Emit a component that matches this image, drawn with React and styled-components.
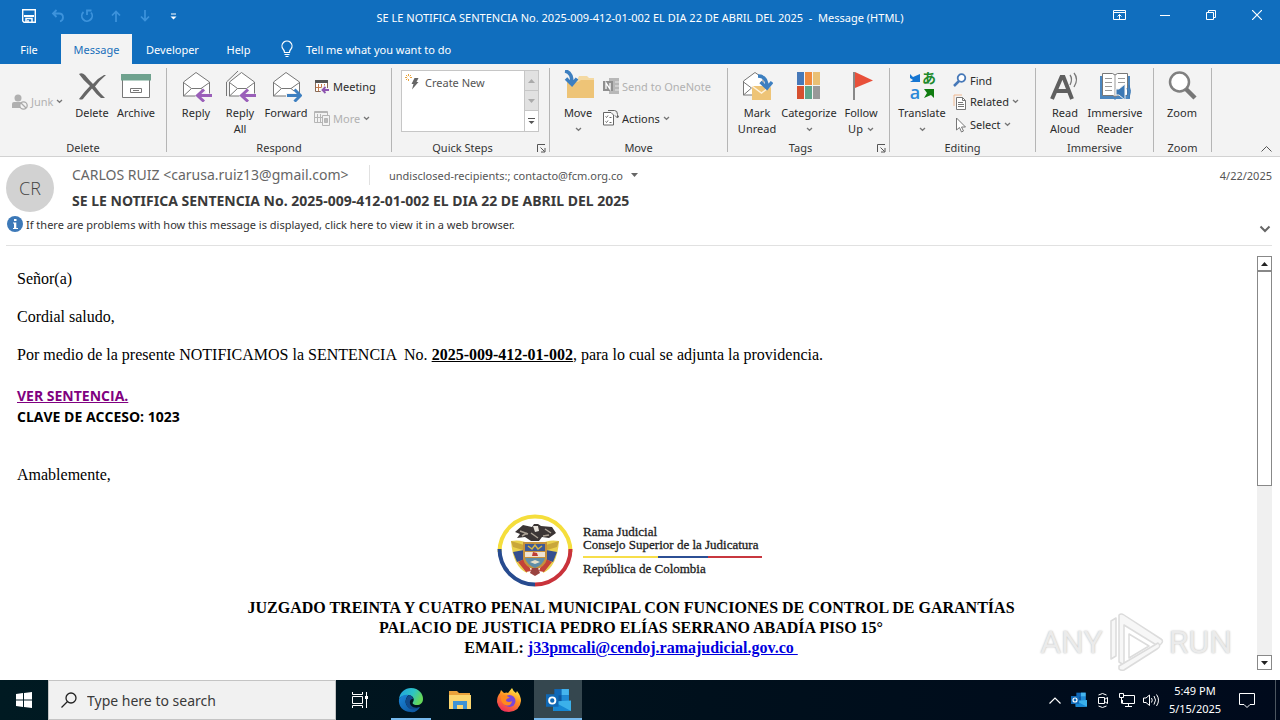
import React from "react";
import styled, { createGlobalStyle, css } from "styled-components";

const ui = '"Noto Sans", "Open Sans", sans-serif';
const serif = '"Liberation Serif", serif';

const GlobalStyle = createGlobalStyle`
  *, *::before, *::after { box-sizing: border-box; }
  body { margin: 0; background: #fff; font-family: ${ui}; font-size: 11px; color: #333; }
  button, input { font: inherit; color: inherit; }
  svg { display: block; flex: none; }
  p, h1, h2 { margin: 0; }
`;

const Window = styled.div`
  min-height: 100vh;
  display: flex;
  flex-direction: column;
`;

const PlainButton = styled.button`
  border: 0;
  padding: 0;
  background: none;
  display: flex;
  align-items: center;
  justify-content: center;
`;

/* ---------- Title bar and tabs ---------- */
const TitleBar = styled.header`
  background: #106ebe;
  color: #fff;
  height: 34px;
  display: grid;
  grid-template-columns: 1fr auto 1fr;
`;
const QuickAccess = styled.div`
  display: flex;
  padding-left: 14px;
`;
const QuickButton = styled(PlainButton)`
  width: 29px;
  height: 32px;
  color: ${(p) => (p.disabled ? "#3d93dc" : "#fff")};
`;
const WindowTitle = styled.h1`
  font-size: 11px;
  font-weight: 400;
  line-height: 36px;
  white-space: pre;
`;
const WindowButtons = styled.div`
  display: flex;
  justify-content: flex-end;
`;
const WindowButton = styled(PlainButton)`
  width: 46px;
  height: 30px;
`;
const TabBar = styled.nav`
  background: #106ebe;
  height: 30px;
  display: flex;
  color: #fff;
`;
const Tab = styled(PlainButton)`
  width: ${(p) => p.$width}px;
  ${(p) =>
    p.$active &&
    css`
      background: #f3f3f3;
      color: #1a6fba;
      margin-left: 3px;
    `}
`;
const TellMe = styled(PlainButton)`
  margin-left: 16px;
  gap: 12px;
`;

/* ---------- Ribbon ---------- */
const Ribbon = styled.section`
  background: #f3f3f3;
  border-bottom: 1px solid #d2d2d2;
  height: 93px;
  padding: 4px 0;
  display: flex;
`;
const Group = styled.div`
  width: ${(p) => p.$width}px;
  flex: none;
  border-right: 1px solid #b5b5b5;
  display: flex;
  flex-direction: column;
`;
const GroupItems = styled.div`
  flex: 1;
  min-height: 0;
  display: flex;
  align-items: flex-start;
  padding: 2px 0 0 ${(p) => p.$pad}px;
`;
const GroupFooter = styled.div`
  display: flex;
  align-items: center;
  flex: none;
  height: 16px;
  margin-bottom: -4px;
`;
const GroupLabel = styled.div`
  flex: 1;
  text-align: center;
  line-height: 16px;
`;
const Launcher = styled(PlainButton)`
  width: 16px;
  height: 16px;
`;
const BigButton = styled(PlainButton)`
  width: ${(p) => p.$width}px;
  flex-direction: column;
  justify-content: flex-start;
  line-height: 16px;
  white-space: nowrap;
  color: #2b2b2b;
`;
const BigIcon = styled.span`
  height: 35px;
`;
const Line = styled.span`
  min-height: 16px;
  display: flex;
  align-items: center;
  gap: 4px;
`;
const SmallColumn = styled.div`
  display: flex;
  flex-direction: column;
  min-width: ${(p) => p.$width || 0}px;
  padding: ${(p) => p.$top || 0}px 0 0 ${(p) => p.$left || 0}px;
`;
const SmallButton = styled(PlainButton)`
  height: ${(p) => p.$height}px;
  justify-content: flex-start;
  gap: 3px;
  white-space: nowrap;
  color: ${(p) => (p.disabled ? "#b1b1b1" : "#2b2b2b")};
`;
const Gallery = styled.div`
  width: 138px;
  height: 62px;
  border: 1px solid #c6c6c6;
  background: #fff;
  display: flex;
  justify-content: space-between;
`;
const GalleryItem = styled(PlainButton)`
  height: 22px;
  padding-left: 3px;
  gap: 4px;
  color: #555;
`;
const GalleryScroll = styled.div`
  width: 14px;
  display: grid;
  grid-template-rows: 1fr 1fr 1fr;
`;
const GalleryArrow = styled(PlainButton)`
  border-left: 1px solid #c6c6c6;
  border-bottom: ${(p) => (p.disabled ? "1px solid #c6c6c6" : "0")};
  background: ${(p) => (p.disabled ? "#e1e1e1" : "#fff")};
  color: #555;
`;
const Collapse = styled(PlainButton)`
  margin: auto 7px -4px auto;
  width: 14px;
  height: 14px;
`;

/* ---------- Message header ---------- */
const MessageHeader = styled.header`
  margin: 0 8px 0 6px;
  padding: 5px 0 11px;
  border-bottom: 1px solid #e1e1e1;
`;
const HeaderTop = styled.div`
  display: flex;
  gap: 18px;
`;
const Avatar = styled.div`
  width: 48px;
  height: 48px;
  margin-top: 2px;
  border-radius: 50%;
  background: #d2d2d2;
  color: #444;
  font: 300 18px "Open Sans", sans-serif;
  display: flex;
  align-items: center;
  justify-content: center;
`;
const HeaderLines = styled.div`
  flex: 1;
`;
const SenderRow = styled.div`
  height: 26px;
  display: flex;
  align-items: center;
  color: #555;
`;
const Sender = styled.span`
  font-size: 14px;
  color: #666;
  width: 298px;
  border-right: 1px solid #e1e1e1;
  line-height: 20px;
  white-space: nowrap;
`;
const Recipients = styled(PlainButton)`
  padding-left: 19px;
  gap: 8px;
`;
const DateText = styled.time`
  margin-left: auto;
`;
const Subject = styled.h2`
  font-size: 14px;
  font-weight: 700;
  line-height: 26px;
  color: #3a3a3a;
`;
const InfoRow = styled.div`
  height: 20px;
  padding-left: 1px;
  display: flex;
  align-items: center;
  gap: 3px;
`;
const InfoText = styled(PlainButton)`
  margin-right: auto;
`;
const Expand = styled(PlainButton)`
  width: 14px;
  height: 14px;
  margin-bottom: -2px;
  align-self: flex-end;
`;

/* ---------- Message body ---------- */
const Reading = styled.main`
  position: relative;
  flex: 1;
  display: flex;
  padding: 10px 8px 10px 17px;
`;
const Letter = styled.article`
  flex: 1;
  padding: 13px 12px 0 0;
  font: 16px/19px ${serif};
  color: #000;
`;
const Paragraph = styled.p`
  margin-bottom: 19px;
  white-space: pre-wrap;
`;
const Access = styled.div`
  font: bold 14px/21px "Open Sans", sans-serif;
  padding: 2px 0 38px;
`;
const VisitedLink = styled.a`
  color: #800080;
`;
const Signature = styled.footer`
  text-align: center;
  font-weight: bold;
  line-height: 20px;
  white-space: pre-wrap;
`;
const Branding = styled.div`
  display: flex;
  justify-content: center;
  align-items: center;
  gap: 10px;
  margin: 27px 0 11px;
  padding-right: 3px;
`;
const BrandText = styled.div`
  width: 179px;
  padding-top: 2px;
  text-align: left;
  font: 13px/13px ${serif};
  -webkit-text-stroke: 0.3px #222;
  color: #222;
  white-space: nowrap;
`;
const FlagRule = styled.div`
  height: 2px;
  margin: 5px 0 4px;
  background: linear-gradient(90deg, #f7de4a 42%, #2c4f94 42% 70%, #c8373f 70%);
`;
const MailLink = styled.a`
  color: #0000e0;
`;
const ScrollBar = styled.div`
  width: 15px;
  background: #f0f0f0;
  display: flex;
  flex-direction: column;
`;
const ScrollArrow = styled(PlainButton)`
  height: 15px;
  background: #fff;
  border: 1px solid #888;
`;
const ScrollTrack = styled.div`
  flex: 1;
`;
const ScrollThumb = styled.div`
  height: 56%;
  background: #fff;
  border: 1px solid #888;
`;
const Watermark = styled.div`
  position: absolute;
  right: 48px;
  bottom: 8px;
  display: flex;
  align-items: center;
  gap: 3px;
  font: 32px/60px Roboto, sans-serif;
  color: #ebebeb;
  text-shadow: 0 0 2px #b5b5b5;
  pointer-events: none;
`;

/* ---------- Taskbar ---------- */
const Taskbar = styled.footer`
  height: 40px;
  background: linear-gradient(90deg, #001a22, #00101c 55%, #000a1c);
  color: #fff;
  display: flex;
`;
const Start = styled(PlainButton)`
  width: 48px;
`;
const Search = styled.label`
  width: 288px;
  background: #f1f1f1;
  border: 1px solid #c4c4c4;
  display: flex;
  align-items: center;
  gap: 10px;
  padding-left: 12px;
`;
const SearchInput = styled.input`
  border: 0;
  padding: 0;
  background: none;
  outline: 0;
  min-width: 0;
  flex: 1;
  font-size: 14px;
  color: #333;
  &::placeholder { color: #3a3a3a; opacity: 1; }
`;
const TaskApps = styled.div`
  display: flex;
  gap: 1px;
`;
const TaskButton = styled(PlainButton)`
  width: 48px;
  &:first-child { margin-right: 2px; }
  ${(p) => p.$active && css`background: #35474f;`}
  ${(p) => p.$running && css`
    background-image: linear-gradient(#76b9ed, #76b9ed);
    background-repeat: no-repeat;
    background-position: bottom;
    background-size: ${p.$active ? "100%" : "40px"} 2px;
  `}
`;
const Tray = styled.div`
  margin-left: auto;
  display: flex;
  padding-right: 4px;
`;
const TrayButton = styled(PlainButton)`
  width: 24px;
`;
const Clock = styled(PlainButton)`
  width: 64px;
  flex-direction: column;
  line-height: 18px;
`;
const Notifications = styled(PlainButton)`
  width: 48px;
  padding-right: 8px;
`;
const ShowDesktop = styled(PlainButton)`
  width: 1px;
  background: #4c5660;
`;

/* ---------- Drawings ---------- */
const Svg = ({ w = 16, h, children, ...rest }) => (
  <svg width={w} height={h || w} viewBox={`0 0 ${w} ${h || w}`} fill="none" stroke="currentColor" aria-hidden="true" {...rest}>
    {children}
  </svg>
);
const Caret = () => (
  <Svg w={7} h={5}><path d="M1 1l2.500 2.300L6 1" stroke="#777" strokeWidth="1.300" /></Svg>
);
const LauncherIcon = () => (
  <Svg w={9} stroke="#555"><path d="M.5 8V.5H8M3.500 3.500l4 4M8 4v4H4" /></Svg>
);
const Triangle = ({ up, color = "#222" }) => (
  <Svg w={7} h={4} stroke="none"><path d={up ? "M0 4L3.500 0 7 4z" : "M0 0h7L3.500 4z"} fill={color} /></Svg>
);
const Envelope = ({ children, double }) => (
  <Svg w={32} stroke="#777">
    {double && <path d="M2.500 26V12L14 1" />}
    <path d={double ? "M5.500 26V12L17.500 2.500 30.500 12v14z" : "M3.500 26V12L16 2.500 29.500 12v14z"} fill="#fff" />
    <path d={double ? "M5.500 12.500l8 6h9l8-6M5.500 26l8-7.500M22.500 18.500L25 21" : "M3.500 12.500l8 6h9.500l8.500-6M3.500 26l8-7.500M21 18.500l3 2.500"} />
    {children}
  </Svg>
);
const ReplyArrow = () => (
  <g>
    <path d="M19 26h14M25 20l-6.500 6 6.500 6" stroke="#f3f3f3" strokeWidth="5" />
    <path d="M18 25.500h14M24 19.500l-6.500 6 6.500 6" stroke="#9a5fb9" strokeWidth="3" />
  </g>
);
const JunkIcon = () => (
  <Svg stroke="none"><circle cx="6" cy="4" r="3.500" fill="#b0b0b0" /><path d="M0 14V10q0-2 2-2h7v6z" fill="#b0b0b0" /><circle cx="11.500" cy="11.500" r="3.700" fill="#f3f3f3" stroke="#aaa" strokeWidth="1.300" /><path d="M9 9l5 5" stroke="#aaa" strokeWidth="1.300" /></Svg>
);
const DeleteIcon = () => (
  <Svg w={32} stroke="none" fill="#666">
    <path d="M3 4q3-2 6 1 4 5 8 9Q22 8 28 5l2 0Q23 11 19 16.500q5 7 10 11.500h-4q-5-4-9-9.500Q10 25 7 29q-2 1-4 0Q8 22 14 16 7 10 3 4z" />
  </Svg>
);
const ArchiveIcon = () => (
  <Svg w={32} stroke="#777"><path d="M2.500 10v17.500h27V10" fill="#fff" /><path d="M1 4h30v6.500H1z" fill="#6fa28e" stroke="none" /><path d="M10.500 18.500h11v4h-11z" /><path d="M13 20.500h6" /></Svg>
);
const MeetingIcon = () => (
  <Svg stroke="#8a6a55"><path d="M1.500 2.500h12v11h-12z" fill="#fff" /><path d="M1 3.500h13" stroke="#555" strokeWidth="3" /><path d="M4.500 6v7M7.500 6v7M10.500 6v3M2 9.500h8" stroke="#c77b4c" /><path d="M8 12h8M11.500 8.500L8 12l3.500 3.500" stroke="#f3f3f3" strokeWidth="4" /><path d="M8.500 12H15M11.500 9l-3 3 3 3" stroke="#8e55b0" strokeWidth="1.800" /></Svg>
);
const MoreIcon = () => (
  <Svg stroke="#b5b5b5"><path d="M.5 1.500h13v11H.5zM0 2.500h14M3.500 4v8M6.500 4v8M1 7.500h7" /><path d="M8.500 5.500h7v10h-7z" fill="#f3f3f3" /><path d="M10.500 8.500h3v4h-3z" fill="#bbb" /></Svg>
);
const QuickStepIcon = () => (
  <Svg><path d="M9.500 4h4l-2 4h2L7 15.500 8.500 10H6.500z" fill="#666" stroke="none" /><path d="M3.500 0v2M3.500 5v2M0 3.500h2M5 3.500h2M1 1l1.300 1.300M6 1L4.700 2.300M1 6l1.300-1.300" stroke="#e8a33d" /></Svg>
);
const MoveIcon = () => (
  <Svg w={32} stroke="none"><path d="M5 12h9l3-6h8l2 2h5v20H5z" fill="#f4d9a2" /><path d="M5 12h11l3-2h13v18H5z" fill="#eec477" /><path d="M3 1q7 1 7 12M4 8.500l6 6 5-6" stroke="#3d7fc0" strokeWidth="3.500" /></Svg>
);
const OneNoteIcon = () => (
  <Svg stroke="none"><path d="M6 0h10v16H6z" fill="#b8b8b8" /><path d="M12 4h4M12 8h4M12 12h4" stroke="#e6e6e6" /><path d="M0 3h10v10H0z" fill="#8f8f8f" /><path d="M3 11V5l4 6V5" stroke="#fff" strokeWidth="1.300" /></Svg>
);
const ActionsIcon = () => (
  <Svg stroke="#666"><path d="M.5 2.500h7.500l2.500 2.500v10H.5z" fill="#fff" /><path d="M2.500 6.500l1 1 1.500-2M2.500 11.500l1 1 1.500-2M6.500 7.500h2M6.500 12.500h2" /><path d="M5 .5h6.500q3 0 3 4v3M12 5.500l2.500 2.500L16 5.500" /></Svg>
);
const MarkIcon = () => (
  <Svg w={32} stroke="#777"><path d="M2.500 25V11L14 2.500 22 8v17z" fill="#fff" /><path d="M2.500 12l8 6-8 7" /><path d="M11 16h19v14H11z" fill="#eec477" stroke="none" /><path d="M11 16l9.500 7 9.500-7" stroke="#fff3dc" strokeWidth="1.500" /><path d="M17 6q9 0 9 11M19.500 12l6.500 6 5-6" stroke="#3d7fc0" strokeWidth="3.300" /></Svg>
);
const CategorizeIcon = () => (
  <Svg w={32} stroke="none">
    <path d="M4 2h7v13H4z" fill="#4678b8" /><path d="M12 2h7v13h-7z" fill="#ef8a3e" /><path d="M20 2h7v13h-7z" fill="#eac074" />
    <path d="M4 16h7v13H4z" fill="#d6502f" /><path d="M12 16h7v13h-7z" fill="#5fa58b" /><path d="M20 16h7v13h-7z" fill="#999" />
  </Svg>
);
const FlagIcon = () => (
  <Svg w={32} stroke="none"><path d="M8 2h2v28H8z" fill="#888" /><path d="M10 2l18 8.500L10 18z" fill="#e8503a" /></Svg>
);
const TranslateMark = styled.span`
  display: grid;
  grid-template-columns: 14px 14px;
  line-height: 15px;
  font-family: "Open Sans", "Noto Sans CJK JP", sans-serif;
  font-size: 18px;
  font-weight: 600;
  color: #2b88d8;
`;
const Kana = styled.span`
  font: bold 14px/15px "Noto Sans CJK JP", sans-serif;
  color: #1f8a2d;
`;
const TranslateIcon = () => (
  <TranslateMark>
    <Svg w={14} stroke="none"><path d="M2 4l3 3 7-3v8H2l3-2-3-2z" fill="#1676d2" /></Svg><Kana>あ</Kana>
    <span>a</span><Svg w={14} stroke="none"><path d="M2 4h10v9l-3-3-7 3 3-5z" fill="#107c10" /></Svg>
  </TranslateMark>
);
const FindIcon = () => (
  <Svg w={14}><circle cx="8.500" cy="5" r="3.800" stroke="#4678b8" strokeWidth="1.800" fill="#fff" /><path d="M6 8l-5 5" stroke="#4678b8" strokeWidth="2.500" /></Svg>
);
const RelatedIcon = () => (
  <Svg w={14} h={16}><path d="M1 12V1h8" stroke="#f0b890" /><path d="M3.500 3.500h6l3 3v9h-9z" fill="#fff" stroke="#777" /><path d="M9.500 3.500v3h3M5 8.500h5M5 10.500h6M5 12.500h6" stroke="#777" /></Svg>
);
const SelectIcon = () => (
  <Svg w={14} h={16}><path d="M3.500 1v12l3-2.500 2 4.500 2-1-2-4h4z" fill="#fff" stroke="#777" /></Svg>
);
const ReadIcon = () => (
  <Svg w={32}><path d="M3 29L12.500 7h2L23 29M7 21h12" stroke="#5f5f5f" strokeWidth="4" /><path d="M21 5q3 4 0 10M25 3q5 6 0 14" stroke="#777" strokeWidth="1.300" /></Svg>
);
const ImmersiveIcon = () => (
  <Svg w={32}><path d="M1 6h30v23H17l-1 1-1-1H1z" fill="#4b86bf" stroke="none" /><path d="M3.500 3.500h10L16 5l2.500-1.500h10v22H18L16 27l-2-1.500H3.500z" fill="#fff" stroke="#777" /><path d="M16 5v21M6 8.500h7M6 12.500h7M6 16.500h7M6 20.500h7M19 8.500h7M19 12.500h7" stroke="#999" /><path d="M17 19h3l6-5v16l-6-5h-3z" fill="#3b78b5" stroke="#f3f3f3" /><path d="M28 18q2 4 0 8M30 15q3 6 0 13" stroke="#3b78b5" /></Svg>
);
const ZoomIcon = () => (
  <Svg w={32}><circle cx="13.500" cy="12" r="9.500" fill="#fff" stroke="#808080" strokeWidth="2.500" /><path d="M20 19l9 9" stroke="#777" strokeWidth="4.500" /></Svg>
);
const InfoIcon = () => (
  <Svg stroke="none"><circle cx="8" cy="8" r="8" fill="#3d79b8" /><path d="M7 3h2.500v2H7zM6 6.500h3.300V12H11v1H6v-1h1V7.500H6z" fill="#fff" /></Svg>
);
const Emblem = () => (
  <Svg w={76} stroke="none">
    <g fill="none" strokeWidth="4">
      <path d="M2.500 41A35.500 35.500 0 1 1 73.500 41" stroke="#f5de3c" />
      <path d="M2.500 38A35.500 35.500 0 0 0 38 73.500" stroke="#274b8f" />
      <path d="M38 73.500A35.500 35.500 0 0 0 73.500 38" stroke="#c9333b" />
    </g>
    <path d="M14 30q10-2 19 3l-3 29q-14-6-16-32zM62 30q-10-2-19 3l3 29q14-6 16-32z" fill="#ead14e" />
    <path d="M14 30l13 4-1 5-10-3zM62 30l-13 4 1 5 10-3z" fill="#c9a73b" />
    <path d="M16 41l11-2 2 9-9 3zM60 41l-11-2-2 9 9 3z" fill="#354f8f" />
    <path d="M21 51l8-4 5 13-5 1zM55 51l-8-4-5 13 5 1z" fill="#c44238" />
    <path d="M18 21l8-7 9 2 2-3 4 0 3 2 11 1 4 6-7 5-7-1-3 4h-8l-6-4-8 1 3-4z" fill="#3b3535" />
    <path d="M23 20l8 3M48 18l6 4M34 22l7 5M25 25l5-3M46 25l6-1" stroke="#aaa094" strokeWidth="1.500" />
    <path d="M36 15h5l1 5-4 1z" fill="#e9e4dc" />
    <path d="M26 31h24v17q-2 8-12 11-10-3-12-11z" fill="#c5913d" />
    <path d="M28 33h20v7H28z" fill="#3e5a96" /><path d="M28 41h20v5H28z" fill="#efe3d2" /><path d="M28 47h20q-2 7-10 10-8-3-10-10z" fill="#5f8ea8" />
    <path d="M31 35l4 3 3-4 3 4 4-3" stroke="#d8b645" strokeWidth="1.500" fill="none" />
    <path d="M36 41l4 1 1 3h-6z" fill="#bd3d36" /><path d="M33 51l5-2 5 2-5 2z" fill="#e7e0c8" />
    <path d="M35 57h6l2 5-5 3-5-3z" fill="#9a433f" />
  </Svg>
);
const PlayMark = () => (
  <Svg w={60} stroke="#dcdcdc"><g strokeLinejoin="round" strokeWidth="1.500" fill="#f7f7f7">
    <path d="M5 9l5-3v38l-5 3z" /><path d="M13 3q2-2 5 0l37 24q3 2 0 5l-3 2L18 13v40l-5-3z" /><path d="M23 22l20 12-20 12z" fill="#fff" /><path d="M13 54l39-23q4 3-1 6L18 58q-3 1-5-1z" />
  </g></Svg>
);
const OutlookIcon = ({ size = 24 }) => (
  <svg width={size} height={size} viewBox="0 0 24 24" aria-hidden="true">
    <path d="M8 1h14v13H8z" fill="#1068b8" /><path d="M15 1h7v6h-7z" fill="#45b5ee" /><path d="M8 7h7v6H8z" fill="#0d569d" /><path d="M15 7h7v6h-7z" fill="#1e89d4" />
    <path d="M7 13l17-1v10H7z" fill="#3bb0ea" /><path d="M7 13l17 9H7z" fill="#1687d4" />
    <path d="M0 6h12v12H0z" fill="#0f68b5" /><circle cx="6" cy="12" r="3" fill="none" stroke="#fff" strokeWidth="1.800" />
  </svg>
);
const EdgeIcon = () => (
  <svg width="26" height="26" viewBox="0 0 26 26" aria-hidden="true">
    <defs>
      <linearGradient id="edgeTop" x1="0" y1="0" x2="1" y2=".4"><stop stopColor="#1f9ee3" /><stop offset=".6" stopColor="#2dc4c5" /><stop offset="1" stopColor="#64d75a" /></linearGradient>
      <linearGradient id="edgeLow" x1="0" y1="0" x2="1" y2="1"><stop stopColor="#1b86da" /><stop offset="1" stopColor="#0c4f96" /></linearGradient>
    </defs>
    <path d="M1 12C2 5 7 1 13 1c8 0 12 6 12 11 0 4-3 6-6 6-4 0-5-2-4-3 2-3 0-6-4-7-4 0-8 1-10 4z" fill="url(#edgeTop)" />
    <path d="M1 12c2-4 7-5 10-4-3 2-4 6-3 9 2 5 7 6 14 3-2 4-6 6-9 5C5 25 0 19 1 12z" fill="url(#edgeLow)" />
    <path d="M11 8c-5 4-4 11 1 14 4 1 8 0 10-2-6 2-11-1-10-6 1-2 2-2 3-2 0-2-2-4-4-4z" fill="#114a8b" />
  </svg>
);
const FolderIcon = () => (
  <Svg w={24} stroke="none"><path d="M1 3h8l2 2h11v5H1z" fill="#e9a23b" /><path d="M1 7h22v14H1z" fill="#fbd66f" /><path d="M5 13h14v8h-4v-4H9v4H5z" fill="#3f93d4" /></Svg>
);
const FirefoxIcon = () => (
  <svg width="26" height="26" viewBox="0 0 26 26" aria-hidden="true">
    <defs><linearGradient id="fox" x1=".8" y1="0" x2=".3" y2="1"><stop stopColor="#fff04a" /><stop offset=".45" stopColor="#ff9222" /><stop offset="1" stopColor="#f02a5c" /></linearGradient></defs>
    <path d="M4 6l1-3 3 3q3-1 4 0l4-5q1 3 4 5l1-2q4 5 4 10-1 10-12 11Q3 25 1 15 1 9 4 6z" fill="url(#fox)" />
    <circle cx="13.500" cy="14" r="6" fill="#7a47d9" /><path d="M5 9q4-1 6 0l3 2q-4 0-4 3 3 2 6 0-1 6-7 4-5-3-4-9z" fill="#ff8a1e" />
  </svg>
);

function Big({ icon, lines, width, menu }) {
  return (
    <BigButton $width={width}>
      <BigIcon>{icon}</BigIcon>
      {lines.map((l) => <Line key={l}>{l}{l === "Up" && <Caret />}</Line>)}
      {menu && <Line><Caret /></Line>}
    </BigButton>
  );
}
function RibbonGroup({ label, width, pad, launcher, children }) {
  return (
    <Group $width={width}>
      <GroupItems $pad={pad}>{children}</GroupItems>
      <GroupFooter>
        <GroupLabel>{label}</GroupLabel>
        {launcher && <Launcher aria-label={`${label} options`}><LauncherIcon /></Launcher>}
      </GroupFooter>
    </Group>
  );
}

export default function App() {
  return (
    <Window>
      <GlobalStyle />
      <TitleBar>
        <QuickAccess>
          <QuickButton aria-label="Save"><Svg w={14}><path d="M.7.7h12.600v12.600H2L.7 12z" strokeWidth="1.400" /><path d="M2 7h10" strokeWidth="2" /><path d="M4 13V9.500h6V13M6 11v2" strokeWidth="1.500" /></Svg></QuickButton>
          <QuickButton disabled aria-label="Undo"><Svg w={14}><path d="M5.500 1L2 4.500 5.500 8M2 4.500h6q4 0 4 4 0 3-3 4" strokeWidth="1.800" /></Svg></QuickButton>
          <QuickButton disabled aria-label="Redo"><Svg w={14}><path d="M3.500 3A5.200 5.200 0 1 0 11 3.500M7 6V1.500h4.500" strokeWidth="1.800" /></Svg></QuickButton>
          <QuickButton disabled aria-label="Previous item"><Svg w={14}><path d="M7 13V2.500M3 6.500l4-4 4 4" strokeWidth="1.700" /></Svg></QuickButton>
          <QuickButton disabled aria-label="Next item"><Svg w={14}><path d="M7 1v10.500M3 7.500l4 4 4-4" strokeWidth="1.700" /></Svg></QuickButton>
          <QuickButton aria-label="Customize toolbar"><Svg w={7}><path d="M1 1h5" /><path d="M.5 3.500h6l-3 3z" fill="currentColor" stroke="none" /></Svg></QuickButton>
        </QuickAccess>
        <WindowTitle>SE LE NOTIFICA SENTENCIA No. 2025-009-412-01-002 EL DIA 22 DE ABRIL DEL 2025  -  Message (HTML)</WindowTitle>
        <WindowButtons>
          <WindowButton aria-label="Ribbon display options"><Svg w={13} h={10}><path d="M.5.500h12v9H.5zM.5 2.500h12M6.500 9V4.500M4.500 6.500l2-2 2 2" /></Svg></WindowButton>
          <WindowButton aria-label="Minimize"><Svg w={10} h={1}><path d="M0 .5h10" /></Svg></WindowButton>
          <WindowButton aria-label="Restore"><Svg w={10}><path d="M.5 2.500h7v7h-7zM2.500 2V.5h7v7H8" /></Svg></WindowButton>
          <WindowButton aria-label="Close"><Svg w={10}><path d="M0 0l10 10M10 0L0 10" strokeWidth="1.200" /></Svg></WindowButton>
        </WindowButtons>
      </TitleBar>
      <TabBar>
        <Tab $width={58}>File</Tab>
        <Tab $width={71} $active>Message</Tab>
        <Tab $width={81}>Developer</Tab>
        <Tab $width={51}>Help</Tab>
        <TellMe>
          <Svg w={14} h={18} strokeWidth="1.200"><path d="M4.500 12.500q0-2-1.500-3.500A5 5 0 1 1 11 9q-1.500 1.500-1.500 3.500zM4.500 14.500h5M5.500 16.500h3" /></Svg>
          Tell me what you want to do
        </TellMe>
      </TabBar>

      <Ribbon>
        <RibbonGroup label="Delete" width={167} pad={12}>
          <SmallColumn $top={20} $width={60}><SmallButton disabled $height={23}><JunkIcon />Junk<Caret /></SmallButton></SmallColumn>
          <Big icon={<DeleteIcon />} lines={["Delete"]} width={40} />
          <Big icon={<ArchiveIcon />} lines={["Archive"]} width={48} />
        </RibbonGroup>
        <RibbonGroup label="Respond" width={225} pad={7}>
          <Big icon={<Envelope><ReplyArrow /></Envelope>} lines={["Reply"]} width={44} />
          <Big icon={<Envelope double><ReplyArrow /></Envelope>} lines={["Reply", "All"]} width={44} />
          <Big icon={<Envelope><path d="M16 26h15" stroke="#f3f3f3" strokeWidth="6" /><path d="M17 25.500h13M24.500 19.500l6 6-6 6" stroke="#3d7fc0" strokeWidth="3" /></Envelope>} lines={["Forward"]} width={48} />
          <SmallColumn $left={4}>
            <SmallButton $height={32}><MeetingIcon />Meeting</SmallButton>
            <SmallButton $height={32} disabled><MoreIcon />More<Caret /></SmallButton>
          </SmallColumn>
        </RibbonGroup>
        <RibbonGroup label="Quick Steps" width={158} pad={9} launcher>
          <Gallery>
            <GalleryItem><QuickStepIcon />Create New</GalleryItem>
            <GalleryScroll>
              <GalleryArrow disabled aria-label="Previous row"><Triangle up color="#aaa" /></GalleryArrow>
              <GalleryArrow disabled aria-label="Next row"><Triangle color="#aaa" /></GalleryArrow>
              <GalleryArrow aria-label="More quick steps"><Svg w={7}><path d="M0 .5h7" /><path d="M.5 3h6l-3 3z" fill="currentColor" stroke="none" /></Svg></GalleryArrow>
            </GalleryScroll>
          </Gallery>
        </RibbonGroup>
        <RibbonGroup label="Move" width={178} pad={8}>
          <Big icon={<MoveIcon />} lines={["Move"]} width={40} menu />
          <SmallColumn $left={5}>
            <SmallButton $height={32} disabled><OneNoteIcon />Send to OneNote</SmallButton>
            <SmallButton $height={32}><ActionsIcon />Actions<Caret /></SmallButton>
          </SmallColumn>
        </RibbonGroup>
        <RibbonGroup label="Tags" width={162} pad={7} launcher>
          <Big icon={<MarkIcon />} lines={["Mark", "Unread"]} width={44} />
          <Big icon={<CategorizeIcon />} lines={["Categorize"]} width={60} menu />
          <Big icon={<FlagIcon />} lines={["Follow", "Up"]} width={44} />
        </RibbonGroup>
        <RibbonGroup label="Editing" width={146} pad={8}>
          <Big icon={<TranslateIcon />} lines={["Translate"]} width={48} menu />
          <SmallColumn $left={7}>
            <SmallButton $height={20}><FindIcon />Find</SmallButton>
            <SmallButton $height={23}><RelatedIcon />Related<Caret /></SmallButton>
            <SmallButton $height={23}><SelectIcon />Select<Caret /></SmallButton>
          </SmallColumn>
        </RibbonGroup>
        <RibbonGroup label="Immersive" width={118} pad={7}>
          <Big icon={<ReadIcon />} lines={["Read", "Aloud"]} width={44} />
          <Big icon={<ImmersiveIcon />} lines={["Immersive", "Reader"]} width={56} />
        </RibbonGroup>
        <RibbonGroup label="Zoom" width={58} pad={8}>
          <Big icon={<ZoomIcon />} lines={["Zoom"]} width={40} />
        </RibbonGroup>
        <Collapse aria-label="Collapse ribbon"><Svg w={11} h={6}><path d="M.5 5.500l5-5 5 5" stroke="#555" /></Svg></Collapse>
      </Ribbon>

      <MessageHeader>
        <HeaderTop>
          <Avatar>CR</Avatar>
          <HeaderLines>
            <SenderRow>
              <Sender>CARLOS RUIZ &lt;carusa.ruiz13@gmail.com&gt;</Sender>
              <Recipients>undisclosed-recipients:; contacto@fcm.org.co<Triangle color="#666" /></Recipients>
              <DateText dateTime="2025-04-22">4/22/2025</DateText>
            </SenderRow>
            <Subject>SE LE NOTIFICA SENTENCIA No. 2025-009-412-01-002 EL DIA 22 DE ABRIL DEL 2025</Subject>
          </HeaderLines>
        </HeaderTop>
        <InfoRow>
          <InfoIcon />
          <InfoText>If there are problems with how this message is displayed, click here to view it in a web browser.</InfoText>
          <Expand aria-label="Expand header"><Svg w={12} h={8}><path d="M1.500 1.500L6 6l4.500-4.500" stroke="#666" strokeWidth="2" /></Svg></Expand>
        </InfoRow>
      </MessageHeader>

      <Reading>
        <Letter>
          <Paragraph>Señor(a)</Paragraph>
          <Paragraph>Cordial saludo,</Paragraph>
          <Paragraph>Por medio de la presente NOTIFICAMOS la SENTENCIA  No. <b><u>2025-009-412-01-002</u></b>, para lo cual se adjunta la providencia.</Paragraph>
          <Access>
            <VisitedLink href="#sentencia">VER SENTENCIA.</VisitedLink>
            <div>CLAVE DE ACCESO: 1023</div>
          </Access>
          <Paragraph>Amablemente,</Paragraph>
          <Signature>
            <Branding>
              <Emblem />
              <BrandText>
                <div>Rama Judicial</div>
                <div>Consejo Superior de la Judicatura</div>
                <FlagRule />
                <div>República de Colombia</div>
              </BrandText>
            </Branding>
            <p>JUZGADO TREINTA Y CUATRO PENAL MUNICIPAL CON FUNCIONES DE CONTROL DE GARANTÍAS</p>
            <p>PALACIO DE JUSTICIA PEDRO ELÍAS SERRANO ABADÍA PISO 15°</p>
            <p>EMAIL: <MailLink href="mailto:j33pmcali@cendoj.ramajudicial.gov.co">j33pmcali@cendoj.ramajudicial.gov.co </MailLink></p>
          </Signature>
        </Letter>
        <ScrollBar>
          <ScrollArrow aria-label="Scroll up"><Triangle up /></ScrollArrow>
          <ScrollTrack><ScrollThumb /></ScrollTrack>
          <ScrollArrow aria-label="Scroll down"><Triangle /></ScrollArrow>
        </ScrollBar>
        <Watermark><span>ANY</span><PlayMark /><span>RUN</span></Watermark>
      </Reading>

      <Taskbar>
        <Start aria-label="Start"><Svg w={16} stroke="none" fill="#fff"><path d="M0 2l7-1v6.500H0zM8 1l8-1v7.500H8zM0 8.500h7V15l-7-1zM8 8.500h8V16l-8-1z" /></Svg></Start>
        <Search>
          <Svg w={16} stroke="#222" strokeWidth="1.300"><circle cx="10" cy="6" r="5" /><path d="M6.500 9.500L.5 15.500" /></Svg>
          <SearchInput type="text" placeholder="Type here to search" aria-label="Type here to search" />
        </Search>
        <TaskApps>
          <TaskButton aria-label="Task view"><Svg w={16}><path d="M.5 0v2.500h10V0M.5 16v-2.500h10V16M.5 4.500h10v7H.5zM14.500 0v16" /><path d="M13 4h3v3h-3z" fill="#fff" stroke="none" /></Svg></TaskButton>
          <TaskButton $running aria-label="Edge"><EdgeIcon /></TaskButton>
          <TaskButton aria-label="File Explorer"><FolderIcon /></TaskButton>
          <TaskButton aria-label="Firefox"><FirefoxIcon /></TaskButton>
          <TaskButton $running $active aria-label="Outlook"><OutlookIcon size={25} /></TaskButton>
        </TaskApps>
        <Tray>
          <TrayButton aria-label="Hidden icons"><Svg w={12} h={7}><path d="M.5 6.500L6 1l5.500 5.500" strokeWidth="1.200" /></Svg></TrayButton>
          <TrayButton aria-label="Outlook"><OutlookIcon size={16} /></TrayButton>
          <TrayButton aria-label="Meet now"><Svg w={16}><path d="M3.500 5.500h6v6h-6zM9.500 7.500l3-2v6l-3-2M3.500 3q4-3 8 0M3.500 14q4 3 8 0" /></Svg></TrayButton>
          <TrayButton aria-label="Network"><Svg w={16}><path d="M5 3.500h10.500v8H3.500V8M9.500 11.500v3M6 14.500h7M.5 1.500h4v4h-4zM2.500 5.500v6" /></Svg></TrayButton>
          <TrayButton aria-label="Volume"><Svg w={16}><path d="M.5 6v4.500H3l3.500 3v-10.500L3 6zM8.500 6q1.500 2 0 4.500M11 4q3 4 0 8.500M13.500 2.500q4 5.500 0 11.500" /></Svg></TrayButton>
          <Clock><span>5:49 PM</span><span>5/15/2025</span></Clock>
          <Notifications aria-label="Notifications"><Svg w={16}><path d="M.5 1.500h15v11H11l-3 3-3-3H.5z" /></Svg></Notifications>
          <ShowDesktop aria-label="Show desktop" />
        </Tray>
      </Taskbar>
    </Window>
  );
}
